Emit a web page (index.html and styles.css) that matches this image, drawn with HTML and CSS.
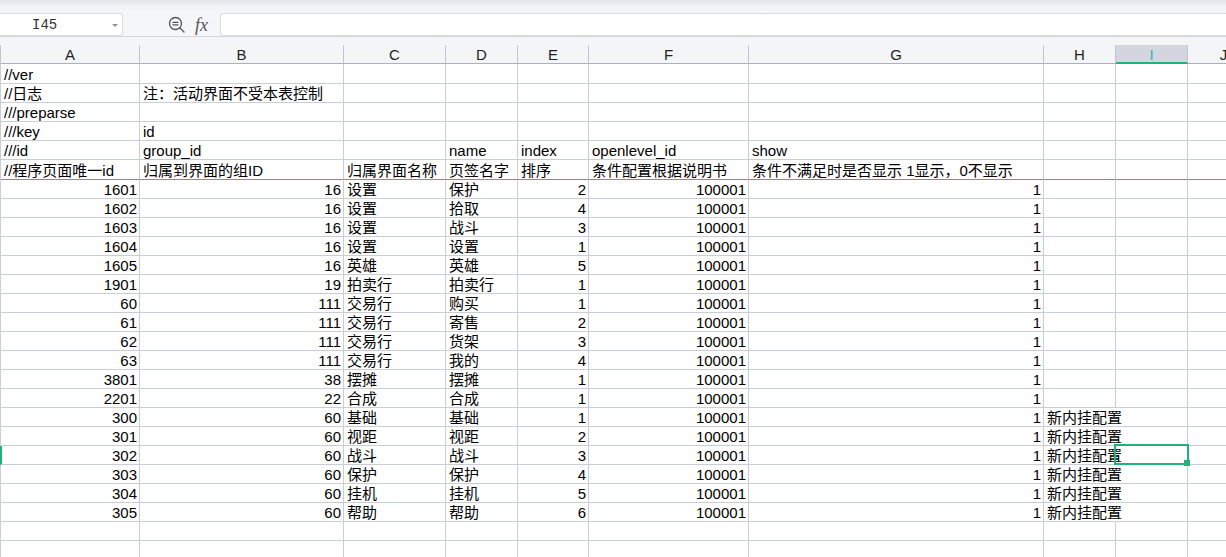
FILE: index.html
```html
<!DOCTYPE html>
<html lang="zh">
<head>
<meta charset="utf-8">
<title>Sheet</title>
<link rel="stylesheet" href="styles.css">
</head>
<body>
<div class="fbar">
  <div class="namebox">I45<span class="caret"></span></div>
  <div class="tools">
    <svg class="zoomicon" width="18" height="18" viewBox="0 0 18 18"><circle cx="7.5" cy="7.5" r="6" fill="none" stroke="#555" stroke-width="1.3"/><path d="M5 6.4h5M5 8.8h5M11.8 11.8L16 16" stroke="#555" stroke-width="1.3" fill="none" stroke-linecap="round"/></svg>
    <span class="fx">fx</span>
  </div>
  <div class="input"></div>
</div>
<div class="colhead">
  <div class="hrow">
    <div class="h">A</div><div class="h">B</div><div class="h">C</div><div class="h">D</div><div class="h">E</div><div class="h">F</div><div class="h">G</div><div class="h">H</div><div class="h active">I</div><div class="h">J</div>
  </div>
</div>
<div class="sheet">
  <div class="row t"><div class="c">//ver</div><div class="c"></div><div class="c"></div><div class="c"></div><div class="c"></div><div class="c"></div><div class="c"></div><div class="c"></div><div class="c"></div><div class="c"></div></div>
  <div class="row"><div class="c">//日志</div><div class="c">注：活动界面不受本表控制</div><div class="c"></div><div class="c"></div><div class="c"></div><div class="c"></div><div class="c"></div><div class="c"></div><div class="c"></div><div class="c"></div></div>
  <div class="row"><div class="c">///preparse</div><div class="c"></div><div class="c"></div><div class="c"></div><div class="c"></div><div class="c"></div><div class="c"></div><div class="c"></div><div class="c"></div><div class="c"></div></div>
  <div class="row"><div class="c">///key</div><div class="c">id</div><div class="c"></div><div class="c"></div><div class="c"></div><div class="c"></div><div class="c"></div><div class="c"></div><div class="c"></div><div class="c"></div></div>
  <div class="row"><div class="c">///id</div><div class="c">group_id</div><div class="c"></div><div class="c">name</div><div class="c">index</div><div class="c">openlevel_id</div><div class="c">show</div><div class="c"></div><div class="c"></div><div class="c"></div></div>
  <div class="row t fz"><div class="c">//程序页面唯一id</div><div class="c">归属到界面的组ID</div><div class="c">归属界面名称</div><div class="c">页签名字</div><div class="c">排序</div><div class="c">条件配置根据说明书</div><div class="c">条件不满足时是否显示 1显示，0不显示</div><div class="c"></div><div class="c"></div><div class="c"></div></div>

  <div class="row"><div class="c n">1601</div><div class="c n">16</div><div class="c">设置</div><div class="c">保护</div><div class="c n">2</div><div class="c n">100001</div><div class="c n">1</div><div class="c"></div><div class="c"></div><div class="c"></div></div>
  <div class="row"><div class="c n">1602</div><div class="c n">16</div><div class="c">设置</div><div class="c">拾取</div><div class="c n">4</div><div class="c n">100001</div><div class="c n">1</div><div class="c"></div><div class="c"></div><div class="c"></div></div>
  <div class="row"><div class="c n">1603</div><div class="c n">16</div><div class="c">设置</div><div class="c">战斗</div><div class="c n">3</div><div class="c n">100001</div><div class="c n">1</div><div class="c"></div><div class="c"></div><div class="c"></div></div>
  <div class="row"><div class="c n">1604</div><div class="c n">16</div><div class="c">设置</div><div class="c">设置</div><div class="c n">1</div><div class="c n">100001</div><div class="c n">1</div><div class="c"></div><div class="c"></div><div class="c"></div></div>
  <div class="row"><div class="c n">1605</div><div class="c n">16</div><div class="c">英雄</div><div class="c">英雄</div><div class="c n">5</div><div class="c n">100001</div><div class="c n">1</div><div class="c"></div><div class="c"></div><div class="c"></div></div>
  <div class="row"><div class="c n">1901</div><div class="c n">19</div><div class="c">拍卖行</div><div class="c">拍卖行</div><div class="c n">1</div><div class="c n">100001</div><div class="c n">1</div><div class="c"></div><div class="c"></div><div class="c"></div></div>
  <div class="row"><div class="c n">60</div><div class="c n">111</div><div class="c">交易行</div><div class="c">购买</div><div class="c n">1</div><div class="c n">100001</div><div class="c n">1</div><div class="c"></div><div class="c"></div><div class="c"></div></div>
  <div class="row"><div class="c n">61</div><div class="c n">111</div><div class="c">交易行</div><div class="c">寄售</div><div class="c n">2</div><div class="c n">100001</div><div class="c n">1</div><div class="c"></div><div class="c"></div><div class="c"></div></div>
  <div class="row"><div class="c n">62</div><div class="c n">111</div><div class="c">交易行</div><div class="c">货架</div><div class="c n">3</div><div class="c n">100001</div><div class="c n">1</div><div class="c"></div><div class="c"></div><div class="c"></div></div>
  <div class="row"><div class="c n">63</div><div class="c n">111</div><div class="c">交易行</div><div class="c">我的</div><div class="c n">4</div><div class="c n">100001</div><div class="c n">1</div><div class="c"></div><div class="c"></div><div class="c"></div></div>
  <div class="row"><div class="c n">3801</div><div class="c n">38</div><div class="c">摆摊</div><div class="c">摆摊</div><div class="c n">1</div><div class="c n">100001</div><div class="c n">1</div><div class="c"></div><div class="c"></div><div class="c"></div></div>
  <div class="row"><div class="c n">2201</div><div class="c n">22</div><div class="c">合成</div><div class="c">合成</div><div class="c n">1</div><div class="c n">100001</div><div class="c n">1</div><div class="c"></div><div class="c"></div><div class="c"></div></div>
  <div class="row"><div class="c n">300</div><div class="c n">60</div><div class="c">基础</div><div class="c">基础</div><div class="c n">1</div><div class="c n">100001</div><div class="c n">1</div><div class="c spill">新内挂配置</div><div class="c"></div><div class="c"></div></div>
  <div class="row"><div class="c n">301</div><div class="c n">60</div><div class="c">视距</div><div class="c">视距</div><div class="c n">2</div><div class="c n">100001</div><div class="c n">1</div><div class="c spill">新内挂配置</div><div class="c"></div><div class="c"></div></div>
  <div class="row active"><div class="c n mark">302</div><div class="c n">60</div><div class="c">战斗</div><div class="c">战斗</div><div class="c n">3</div><div class="c n">100001</div><div class="c n">1</div><div class="c spill">新内挂配置</div><div class="c sel"></div><div class="c"></div></div>
  <div class="row"><div class="c n">303</div><div class="c n">60</div><div class="c">保护</div><div class="c">保护</div><div class="c n">4</div><div class="c n">100001</div><div class="c n">1</div><div class="c spill">新内挂配置</div><div class="c"></div><div class="c"></div></div>
  <div class="row"><div class="c n">304</div><div class="c n">60</div><div class="c">挂机</div><div class="c">挂机</div><div class="c n">5</div><div class="c n">100001</div><div class="c n">1</div><div class="c spill">新内挂配置</div><div class="c"></div><div class="c"></div></div>
  <div class="row"><div class="c n">305</div><div class="c n">60</div><div class="c">帮助</div><div class="c">帮助</div><div class="c n">6</div><div class="c n">100001</div><div class="c n">1</div><div class="c spill">新内挂配置</div><div class="c"></div><div class="c"></div></div>
  <div class="row"><div class="c"></div><div class="c"></div><div class="c"></div><div class="c"></div><div class="c"></div><div class="c"></div><div class="c"></div><div class="c"></div><div class="c"></div><div class="c"></div></div>
  <div class="row"><div class="c"></div><div class="c"></div><div class="c"></div><div class="c"></div><div class="c"></div><div class="c"></div><div class="c"></div><div class="c"></div><div class="c"></div><div class="c"></div></div>
</div>
</body>
</html>
```
FILE: styles.css
```css
:root {
  --cols: 139px 204px 102px 72px 71px 160px 295px 72px 72px 72px;
  --g: #c9cdd8;
  --green: #1fb37a;
}
* { box-sizing: border-box; }
html, body { margin: 0; padding: 0; }
body {
  width: 1226px;
  height: 557px;
  overflow: hidden;
  background: #fff;
  color: #000;
  font-family: "Liberation Sans", "Noto Sans CJK SC", sans-serif;
}

/* formula bar */
.fbar {
  height: 36px;
  padding-top: 13px;
  display: flex;
  background: linear-gradient(#e3e4e7 0, #eff0f2 5px, #f5f6f8 12px, #f5f6f8 100%);
}
.namebox {
  position: relative;
  width: 123px;
  flex: none;
  background: #fff;
  border: 1px solid #d8dbe1;
  border-left: none;
  border-radius: 0 3px 3px 0;
  padding-left: 32px;
  font: 14px "Liberation Mono", monospace;
  line-height: 22px;
  color: #333;
}
.caret {
  position: absolute;
  right: 4px;
  top: 10px;
  width: 0;
  height: 0;
  border-left: 3px solid transparent;
  border-right: 3px solid transparent;
  border-top: 3px solid #8c919b;
}
.tools {
  width: 97px;
  flex: none;
  display: flex;
  align-items: center;
  padding-left: 45px;
}
.zoomicon { display: block; }
.fx {
  margin-left: 9px;
  font: italic 18px "Liberation Serif", serif;
  color: #555;
  line-height: 20px;
}
.input {
  flex: 1;
  background: #fff;
  border: 1px solid #d8dbe1;
  border-right: none;
  border-radius: 3px 0 0 3px;
}

/* column header */
.colhead {
  border-top: 1px solid #d3d6dc;
  background: #f4f5f7;
  padding-top: 8px;
}
.hrow {
  display: grid;
  grid-template-columns: var(--cols);
  height: 19px;
  border-left: 1px solid #c0c6d1;
}
.h {
  border-right: 1px solid #c0c6d1;
  border-bottom: 1px solid #a9b1c1;
  text-align: center;
  font-size: 15px;
  line-height: 20px;
  color: #1f1f1f;
  overflow: hidden;
}
.h.active {
  background: #d3d6de;
  border-bottom: 2px solid var(--green);
  color: #2ab9a8;
}

/* sheet rows */
.row {
  display: grid;
  grid-template-columns: var(--cols);
  height: 19px;
  border-left: 1px solid var(--g);
}
.row.t { height: 20px; }
.c {
  display: flex;
  align-items: flex-end;
  border-right: 1px solid var(--g);
  border-bottom: 1px solid var(--g);
  padding: 0 2px 0 3px;
  font-size: 15px;
  line-height: 17px;
  white-space: nowrap;
  overflow: hidden;
}
.c.n { justify-content: flex-end; }
.row.fz .c { border-bottom-color: #52ab80; }
.c.spill {
  overflow: visible;
  border-right-color: transparent;
}
.row.active { border-left-color: var(--green); }
.c.mark { box-shadow: inset 1px 0 0 var(--green); }
.c.sel {
  position: relative;
  overflow: visible;
}
.c.sel::after {
  content: "";
  position: absolute;
  left: -2px;
  top: -2px;
  right: -2px;
  bottom: -1px;
  border: 2px solid var(--green);
  z-index: 2;
}
.c.sel::before {
  content: "";
  position: absolute;
  right: -3px;
  bottom: -2px;
  width: 6px;
  height: 6px;
  background: var(--green);
  z-index: 3;
}
```
